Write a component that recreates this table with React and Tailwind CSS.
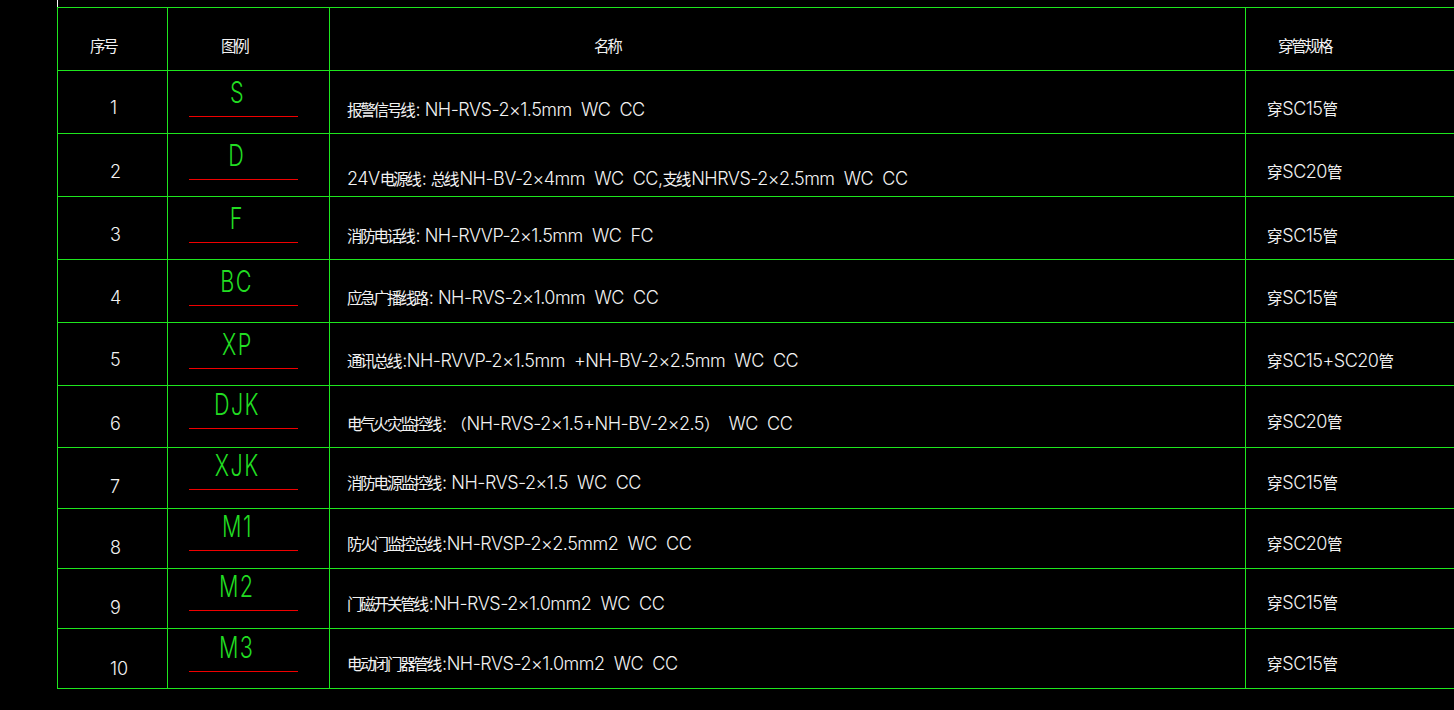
import React from "react";

const CJK = /([\u2E80-\u9FFF\uFF00-\uFFEF\u3000-\u303F]+)/;

function Mixed({ text }) {
  const parts = text.split(CJK).filter((p) => p !== "");
  return (
    <span className="whitespace-pre">
      {parts.map((p, i) =>
        CJK.test(p) ? (
          <span
            key={i}
            className="text-[15.5px] tracking-[-2.2px] mr-[2px] font-['Noto_Sans_CJK_SC',sans-serif]"
          >
            {p}
          </span>
        ) : (
          <span
            key={i}
            className="text-[18px] font-light tracking-[-0.5px] font-[Inter,'Liberation_Sans',sans-serif]"
          >
            {p}
          </span>
        )
      )}
    </span>
  );
}

const rows = [
  {
    n: "1", sym: "S", h: "h-[63px]",
    name: "报警信号线: NH-RVS-2×1.5mm  WC  CC", spec: "穿SC15管",
    numT: "pt-[27px]", nameT: "pt-[28px]", specT: "pt-[27px]",
    symT: "pt-[6px]", lineT: "mt-[9px]",
  },
  {
    n: "2", sym: "D", h: "h-[63px]",
    name: "24V电源线: 总线NH-BV-2×4mm  WC  CC,支线NHRVS-2×2.5mm  WC  CC", spec: "穿SC20管",
    numT: "pt-[28px]", nameT: "pt-[34px]", specT: "pt-[27px]",
    symT: "pt-[6px]", lineT: "mt-[9px]",
  },
  {
    n: "3", sym: "F", h: "h-[63px]",
    name: "消防电话线: NH-RVVP-2×1.5mm  WC  FC", spec: "穿SC15管",
    numT: "pt-[28px]", nameT: "pt-[28px]", specT: "pt-[28px]",
    symT: "pt-[6px]", lineT: "mt-[9px]",
  },
  {
    n: "4", sym: "BC", h: "h-[63px]",
    name: "应急广播线路: NH-RVS-2×1.0mm  WC  CC", spec: "穿SC15管",
    numT: "pt-[28px]", nameT: "pt-[27px]", specT: "pt-[27px]",
    symT: "pt-[6px]", lineT: "mt-[9px]",
  },
  {
    n: "5", sym: "XP", h: "h-[63px]",
    name: "通讯总线:NH-RVVP-2×1.5mm  +NH-BV-2×2.5mm  WC  CC", spec: "穿SC15+SC20管",
    numT: "pt-[27px]", nameT: "pt-[27px]", specT: "pt-[27px]",
    symT: "pt-[6px]", lineT: "mt-[9px]",
  },
  {
    n: "6", sym: "DJK", h: "h-[62px]",
    name: "电气火灾监控线: （NH-RVS-2×1.5+NH-BV-2×2.5）  WC  CC", spec: "穿SC20管",
    numT: "pt-[28px]", nameT: "pt-[27px]", specT: "pt-[25px]",
    symT: "pt-[3px]", lineT: "mt-[9px]",
  },
  {
    n: "7", sym: "XJK", h: "h-[61px]",
    name: "消防电源监控线: NH-RVS-2×1.5  WC  CC", spec: "穿SC15管",
    numT: "pt-[29px]", nameT: "pt-[24px]", specT: "pt-[24px]",
    symT: "pt-[2px]", lineT: "mt-[9px]",
  },
  {
    n: "8", sym: "M1", h: "h-[60px]",
    name: "防火门监控总线:NH-RVSP-2×2.5mm2  WC  CC", spec: "穿SC20管",
    numT: "pt-[29px]", nameT: "pt-[24px]", specT: "pt-[24px]",
    symT: "pt-[2px]", lineT: "mt-[9px]",
  },
  {
    n: "9", sym: "M2", h: "h-[60px]",
    name: "门磁开关管线:NH-RVS-2×1.0mm2  WC  CC", spec: "穿SC15管",
    numT: "pt-[29px]", nameT: "pt-[24px]", specT: "pt-[23px]",
    symT: "pt-[2px]", lineT: "mt-[9px]",
  },
  {
    n: "10", sym: "M3", h: "h-[60px]",
    name: "电动闭门器管线:NH-RVS-2×1.0mm2  WC  CC", spec: "穿SC15管",
    numT: "pt-[30px]", nameT: "pt-[24px]", specT: "pt-[24px]",
    symT: "pt-[3px]", lineT: "mt-[9px]",
  },
];

export default function App() {
  return (
    <div className="w-[1454px] h-[710px] bg-black overflow-hidden text-[#f2f2f2] leading-[20px]">
      <div className="ml-[57px] w-px h-[7px] bg-white" />
      <div className="ml-[57px] w-[1500px] border-t border-l border-[#1ee61e]">
        {/* header */}
        <div className="flex h-[63px] border-b border-[#1ee61e]">
          <div className="w-[110px] shrink-0 border-r border-[#1ee61e] pl-[32px] pt-[27px]">
            <Mixed text="序号" />
          </div>
          <div className="w-[162px] shrink-0 border-r border-[#1ee61e] pl-[53px] pt-[27px]">
            <Mixed text="图例" />
          </div>
          <div className="w-[916px] shrink-0 border-r border-[#1ee61e] pl-[264px] pt-[27px]">
            <Mixed text="名称" />
          </div>
          <div className="flex-1 pl-[32px] pt-[27px]">
            <Mixed text="穿管规格" />
          </div>
        </div>
        {rows.map((r) => (
          <div key={r.n} className={`flex border-b border-[#1ee61e] ${r.h}`}>
            <div className={`w-[110px] shrink-0 border-r border-[#1ee61e] pl-[52px] ${r.numT}`}>
              <span className="text-[18px] font-light font-[Inter,'Liberation_Sans',sans-serif]">
                {r.n}
              </span>
            </div>
            <div className={`w-[162px] shrink-0 border-r border-[#1ee61e] pl-[21px] ${r.symT}`}>
              <div className="w-[96px] h-[30px] flex justify-center">
                <span className="inline-block scale-x-[0.72] text-[30px] leading-[30px] tracking-[2px] font-light text-[#22dd22] font-[Inter,'Liberation_Sans',sans-serif]">
                  {r.sym}
                </span>
              </div>
              <div className={`w-[109px] h-px bg-[#f00000] ${r.lineT}`} />
            </div>
            <div className={`w-[916px] shrink-0 border-r border-[#1ee61e] pl-[17px] ${r.nameT}`}>
              <Mixed text={r.name} />
            </div>
            <div className={`flex-1 pl-[21px] ${r.specT}`}>
              <Mixed text={r.spec} />
            </div>
          </div>
        ))}
      </div>
    </div>
  );
}
